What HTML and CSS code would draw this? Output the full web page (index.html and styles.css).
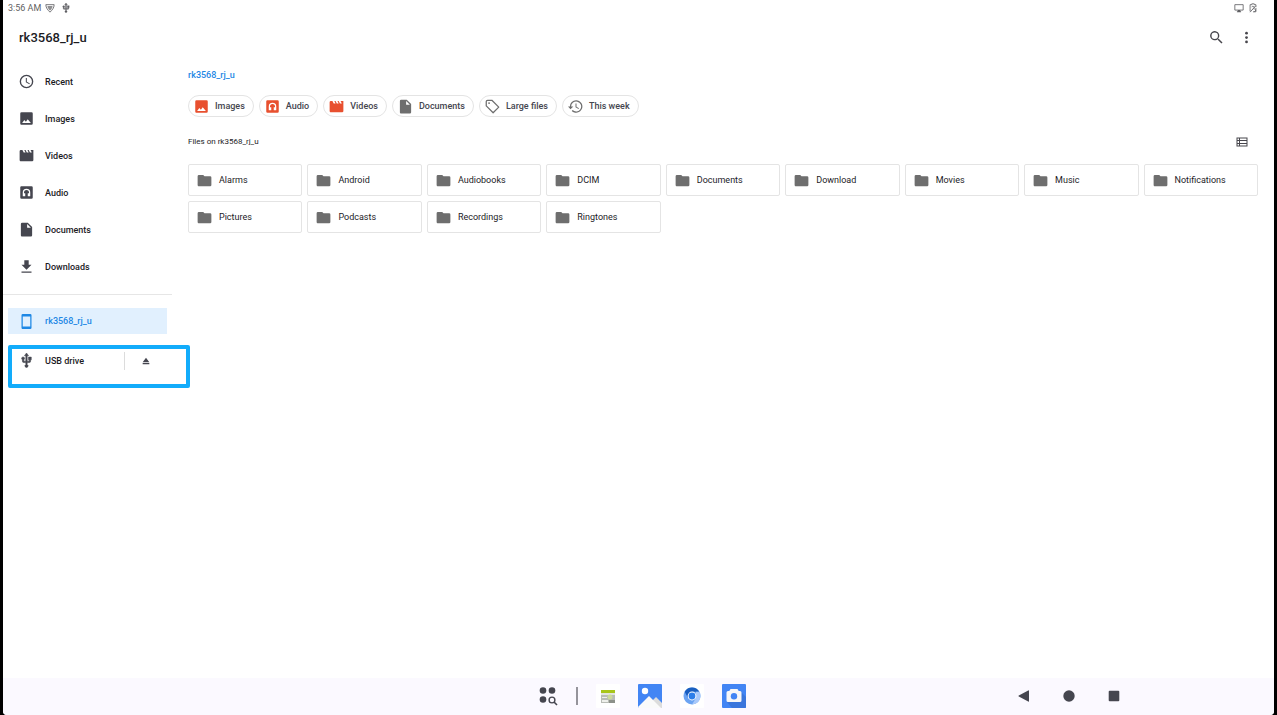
FILE: index.html
```html
<!DOCTYPE html>
<html lang="en">
<head>
  <meta charset="UTF-8">
  <meta name="viewport" content="width=device-width, initial-scale=1.0">
  <title>Files</title>
  <link rel="stylesheet" href="styles.css">
</head>
<body>
  <svg class="sprite" aria-hidden="true">
    <symbol id="i-clock" viewBox="1 1 22 22"><path d="M12 2a10 10 0 1 0 0 20 10 10 0 0 0 0-20zm0 18a8 8 0 1 1 0-16 8 8 0 0 1 0 16zm.5-13H11v6l5.2 3.2.8-1.3-4.5-2.7z"/></symbol>
    <symbol id="i-image" viewBox="0 0 24 24"><path d="M22 20V4a2 2 0 0 0-2-2H4a2 2 0 0 0-2 2v16c0 1.100.9 2 2 2h16a2 2 0 0 0 2-2zM5 19l3.500-4.500 2.500 2.500 3-4 5 6z" fill-rule="evenodd"/></symbol>
    <symbol id="i-video" viewBox="0 0 24 24"><path d="M18.500 3l2 4h-3l-2-4h-2l2 4h-3l-2-4h-2l2 4h-3l-2-4H3a2 2 0 0 0-2 2v14c0 1.100.9 2 2 2h18a2 2 0 0 0 2-2V3z"/></symbol>
    <symbol id="i-audio" viewBox="0 0 24 24"><path fill-rule="evenodd" d="M4 2h16a2 2 0 0 1 2 2v16a2 2 0 0 1-2 2H4a2 2 0 0 1-2-2V4c0-1.100.9-2 2-2zm2 10v6h4v-5H8v-1a4 4 0 0 1 8 0v1h-2v5h4v-6a6 6 0 0 0-12 0z"/></symbol>
    <symbol id="i-doc" viewBox="0 0 24 24"><path d="M5 1a2 2 0 0 0-2 2v18c0 1.100.9 2 2 2h14a2 2 0 0 0 2-2V8l-7-7zm8 8V3l6 6z"/></symbol>
    <symbol id="i-download" viewBox="0 0 24 24"><path d="M20 9h-4.500V2h-7v7H4l8 8zM4 20v2h16v-2z"/></symbol>
    <symbol id="i-phone" viewBox="0 0 24 24"><path fill-rule="evenodd" d="M18 0H6a2 2 0 0 0-2 2v20c0 1.100.9 2 2 2h12a2 2 0 0 0 2-2V2a2 2 0 0 0-2-2zm0 20H6V4h12z"/></symbol>
    <symbol id="i-usb" viewBox="1 1 22 22"><path stroke="currentColor" stroke-width=".8" d="M15 7v4h1v2h-3V5h2l-3-4-3 4h2v8H8v-2.070c.7-.37 1.200-1.080 1.200-1.930a2.200 2.200 0 1 0-4.400 0c0 .85.500 1.560 1.200 1.930V13a2 2 0 0 0 2 2h3v3.050a2.200 2.200 0 1 0 2 0V15h3a2 2 0 0 0 2-2v-2h1V7z"/></symbol>
    <symbol id="i-eject" viewBox="0 0 24 24"><path d="M4 17h16v3H4zM12 4L4 15h16z"/></symbol>
    <symbol id="i-tag" viewBox="0 0 24 24"><path fill="none" stroke="currentColor" stroke-width="2" stroke-linejoin="round" d="M2 4v7l11 11 9-9L11 2H4a2 2 0 0 0-2 2z"/><circle cx="6.500" cy="6.500" r="1.500"/></symbol>
    <symbol id="i-history" viewBox="0 0 24 24"><path d="M13 2a10 10 0 0 0-10 10H0l4 4.500L8.500 12H5a8 8 0 1 1 2.400 5.700L6 19.100A10 10 0 1 0 13 2zm-1 5v6l4.800 2.900.8-1.300-4-2.400V7z"/></symbol>
    <symbol id="i-folder" viewBox="0 0 24 24"><path d="M10 3H3a2 2 0 0 0-2 2v14c0 1.100.9 2 2 2h18a2 2 0 0 0 2-2V7a2 2 0 0 0-2-2h-9z"/></symbol>
    <symbol id="i-search" viewBox="0 0 24 24"><path d="M15.500 14h-.8l-.3-.3a6.500 6.500 0 1 0-.7.7l.3.3v.8l5 5 1.500-1.500zm-6 0a4.500 4.500 0 1 1 0-9 4.500 4.500 0 0 1 0 9z"/></symbol>
    <symbol id="i-more" viewBox="0 0 24 24"><circle cx="12" cy="5" r="2.200"/><circle cx="12" cy="12" r="2.200"/><circle cx="12" cy="19" r="2.200"/></symbol>
    <symbol id="i-list" viewBox="0 0 24 24"><path fill-rule="evenodd" d="M1 3h22v18H1zm2 2v3h3V5zm5 0v3h13V5zm-5 5v4h3v-4zm5 0v4h13v-4zm-5 6v3h3v-3zm5 0v3h13v-3z"/></symbol>
    <symbol id="i-shield" viewBox="0 0 24 24"><path fill="none" stroke="currentColor" stroke-width="2" d="M2 4h20c0 8-5 13-10 18C7 17 2 12 2 4z"/><path d="M6 7h12c0 5-3 8-6 11-3-3-6-6-6-11z" opacity=".7"/></symbol>
    <symbol id="i-screen" viewBox="0 0 24 24"><path fill="none" stroke="currentColor" stroke-width="2" d="M2 4h20v13H2z"/><path d="M9 17h6v3h2v2H7v-2h2z"/></symbol>
    <symbol id="i-battery" viewBox="0 0 24 24"><path fill="none" stroke="currentColor" stroke-width="2" d="M5 20V4h4V2h6v2h4v6M5 22L18 7M9 10a3 3 0 1 1 5 3l-3 3M19 12v9h-7M15 14l4 3-4 5"/></symbol>
  </svg>

  <div class="screen">
    <div class="statusbar">
      <span>3:56 AM</span>
      <svg class="icon-xs"><use href="#i-shield"/></svg>
      <svg class="icon-xs status-usb"><use href="#i-usb"/></svg>
      <svg class="icon-xs push"><use href="#i-screen"/></svg>
      <svg class="icon-xs"><use href="#i-battery"/></svg>
    </div>

    <header class="toolbar">
      <h1>rk3568_rj_u</h1>
      <button class="icon-btn" aria-label="Search"><svg class="icon-lg"><use href="#i-search"/></svg></button>
      <button class="icon-btn" aria-label="More options"><svg class="icon"><use href="#i-more"/></svg></button>
    </header>

    <div class="content">
      <nav class="sidebar">
        <a class="root" href="#"><svg class="icon"><use href="#i-clock"/></svg>Recent</a>
        <a class="root" href="#"><svg class="icon"><use href="#i-image"/></svg>Images</a>
        <a class="root" href="#"><svg class="icon"><use href="#i-video"/></svg>Videos</a>
        <a class="root" href="#"><svg class="icon"><use href="#i-audio"/></svg>Audio</a>
        <a class="root" href="#"><svg class="icon"><use href="#i-doc"/></svg>Documents</a>
        <a class="root" href="#"><svg class="icon"><use href="#i-download"/></svg>Downloads</a>
        <hr>
        <a class="root selected" href="#"><svg class="icon"><use href="#i-phone"/></svg>rk3568_rj_u</a>
        <div class="usb">
          <a class="root" href="#"><svg class="icon"><use href="#i-usb"/></svg>USB drive</a>
          <button class="eject" aria-label="Eject"><svg class="icon-xs"><use href="#i-eject"/></svg></button>
          <div class="highlight"></div>
        </div>
      </nav>

      <main class="files">
        <a class="crumb" href="#">rk3568_rj_u</a>
        <div class="chips">
          <button class="chip red"><svg class="icon"><use href="#i-image"/></svg>Images</button>
          <button class="chip red"><svg class="icon"><use href="#i-audio"/></svg>Audio</button>
          <button class="chip red"><svg class="icon"><use href="#i-video"/></svg>Videos</button>
          <button class="chip"><svg class="icon"><use href="#i-doc"/></svg>Documents</button>
          <button class="chip"><svg class="icon"><use href="#i-tag"/></svg>Large files</button>
          <button class="chip"><svg class="icon"><use href="#i-history"/></svg>This week</button>
        </div>
        <div class="list-head">
          <h2>Files on rk3568_rj_u</h2>
          <button class="icon-btn" aria-label="List view"><svg class="icon-sm"><use href="#i-list"/></svg></button>
        </div>
        <div class="grid">
          <a class="folder" href="#"><svg class="icon"><use href="#i-folder"/></svg>Alarms</a>
          <a class="folder" href="#"><svg class="icon"><use href="#i-folder"/></svg>Android</a>
          <a class="folder" href="#"><svg class="icon"><use href="#i-folder"/></svg>Audiobooks</a>
          <a class="folder" href="#"><svg class="icon"><use href="#i-folder"/></svg>DCIM</a>
          <a class="folder" href="#"><svg class="icon"><use href="#i-folder"/></svg>Documents</a>
          <a class="folder" href="#"><svg class="icon"><use href="#i-folder"/></svg>Download</a>
          <a class="folder" href="#"><svg class="icon"><use href="#i-folder"/></svg>Movies</a>
          <a class="folder" href="#"><svg class="icon"><use href="#i-folder"/></svg>Music</a>
          <a class="folder" href="#"><svg class="icon"><use href="#i-folder"/></svg>Notifications</a>
          <a class="folder" href="#"><svg class="icon"><use href="#i-folder"/></svg>Pictures</a>
          <a class="folder" href="#"><svg class="icon"><use href="#i-folder"/></svg>Podcasts</a>
          <a class="folder" href="#"><svg class="icon"><use href="#i-folder"/></svg>Recordings</a>
          <a class="folder" href="#"><svg class="icon"><use href="#i-folder"/></svg>Ringtones</a>
        </div>
      </main>
    </div>

    <footer class="taskbar">
      <div class="apps">
        <button class="all-apps" aria-label="All apps">
          <svg viewBox="0 0 20 20"><circle cx="5" cy="4.500" r="3.300"/><circle cx="14" cy="4.500" r="3.300"/><circle cx="5" cy="13.500" r="3.300"/><circle cx="14" cy="14" r="2.900" fill="none" stroke="currentColor" stroke-width="1.400"/><path d="M16 16l3 3" stroke="currentColor" stroke-width="1.600"/></svg>
        </button>
        <span class="sep"></span>
        <button class="app" aria-label="Explorer">
          <svg viewBox="0 0 24 24"><rect width="24" height="24" rx="1" fill="#fff"/><path fill="#b9bdb6" d="M5 6h14v13H5z"/><path fill="#a8c61a" d="M5 6h14v3H5z"/><path fill="#e3e5df" d="M5 9h14v2H5z"/><path fill="#eef0eb" d="M6 13h5v1H6zM6 16h6v2H6z"/><circle cx="14" cy="13" r="2.500" fill="#cddb9a"/><path fill="#8d928a" d="M13 16h6v3h-6z"/></svg>
        </button>
        <button class="app" aria-label="Gallery">
          <svg viewBox="0 0 24 24"><rect width="24" height="24" rx="1" fill="#4285f4"/><circle cx="7" cy="7" r="3.200" fill="#fff"/><path fill="#dcdcdc" d="M13 18l5-5 6 6v5H13z"/><path fill="#fafafa" d="M0 23l11-11 12 12H1a1 1 0 0 1-1-1z"/></svg>
        </button>
        <button class="app" aria-label="Browser">
          <svg viewBox="0 0 24 24"><rect width="24" height="24" rx="1" fill="#fff"/><circle cx="12" cy="12" r="8.500" fill="#6ba4f2"/><path fill="#1a5fc0" d="M4.600 7.800A8.500 8.500 0 0 1 19.400 7.800H12l-4 6z"/><path fill="#a9c9fa" d="M19.400 7.800A8.500 8.500 0 0 1 12 20.500l4-6.500V7.800z"/><circle cx="12" cy="12" r="4.400" fill="#fff"/><circle cx="12" cy="12" r="3.400" fill="#2b7de9"/></svg>
        </button>
        <button class="app" aria-label="Camera">
          <svg viewBox="0 0 24 24"><rect width="24" height="24" rx="1" fill="#4285f4"/><path fill="#3a76dc" d="M19 8l5 5v10a1 1 0 0 1-1 1H10l-5-6z"/><path fill="#f7f7f7" d="M8.500 5h7l1.200 2H18a1.500 1.500 0 0 1 1.500 1.500v8A1.500 1.500 0 0 1 18 18H6a1.500 1.500 0 0 1-1.500-1.500v-8A1.500 1.500 0 0 1 6 7h1.300z"/><circle cx="12" cy="12.300" r="3.200" fill="#4285f4"/></svg>
        </button>
      </div>
      <div class="nav-keys">
        <button aria-label="Back"><svg viewBox="0 0 12 12"><path d="M11 .8v10.400a.5.500 0 0 1-.8.300L.8 6.500a.6.600 0 0 1 0-1L10.200.5a.5.500 0 0 1 .8.300z"/></svg></button>
        <button aria-label="Home"><svg viewBox="0 0 12 12"><circle cx="6" cy="6" r="5.700"/></svg></button>
        <button aria-label="Overview"><svg viewBox="0 0 12 12"><rect x=".7" y=".7" width="10.600" height="10.600" rx="1"/></svg></button>
      </div>
    </footer>
  </div>
</body>
</html>
```

FILE: styles.css
```css
* {
  box-sizing: border-box;
}

body {
  margin: 0;
  padding: 0 3px;
  background-color: #000;
  color: #1c1b1f;
  font-family: Roboto, sans-serif;
  font-size: 9px;
  line-height: 12px;
}

svg {
  display: block;
  flex: none;
  fill: currentColor;
}

a {
  color: inherit;
  text-decoration: none;
}

button {
  padding: 0;
  border: none;
  background: none;
  color: inherit;
  font: inherit;
  cursor: pointer;
}

.sprite {
  display: none;
}

.icon-xs {
  width: 10px;
  height: 10px;
}

.icon-sm {
  width: 12px;
  height: 12px;
}

.icon {
  width: 15px;
  height: 15px;
}

.icon-lg {
  width: 17px;
  height: 17px;
}

.screen {
  display: flex;
  flex-direction: column;
  min-height: 100vh;
  background-color: #fff;
  border-radius: 0 0 4px 4px;
}

.statusbar {
  display: flex;
  align-items: center;
  gap: 4px;
  height: 16px;
  padding: 0 16px 0 5px;
  color: #5f5f63;
}

.status-usb {
  margin-left: 2px;
}

.push {
  margin-left: auto;
}

.toolbar {
  display: flex;
  align-items: center;
  gap: 14px;
  height: 43px;
  padding: 0 20px 0 16px;
}

.toolbar h1 {
  flex: 1;
  margin: 0;
  font-size: 13px;
  font-weight: 500;
  line-height: 16px;
}

.icon-btn {
  color: #47464c;
}

.content {
  display: flex;
  flex: 1;
}

.sidebar {
  width: 169px;
  padding-top: 4px;
  font-weight: 500;
}

.root {
  display: flex;
  align-items: center;
  gap: 11px;
  height: 37px;
  padding-left: 16px;
}

.root svg {
  color: #45464f;
}

.sidebar hr {
  margin: 9px 0 13px;
  border: none;
  border-top: 1px solid #e6e6e6;
}

.root.selected {
  height: 26px;
  margin: 0 5px;
  padding-left: 11px;
  background-color: #e1f0fe;
  color: #1e88e5;
}

.selected svg {
  color: inherit;
}

.usb {
  display: flex;
  align-items: center;
  position: relative;
  margin-top: 8px;
}

.usb .root {
  flex: 1;
}

.eject {
  display: flex;
  align-items: center;
  width: 48px;
  height: 18px;
  padding-left: 16px;
  border-left: 1px solid #dcdcdc;
  color: #45464f;
}

/* frame drawn over the drive row, a bit wider than the sidebar */
.highlight {
  position: absolute;
  top: 3px;
  left: 5px;
  right: -18px;
  height: 43px;
  border: 4px solid #12acfb;
  border-radius: 2px;
  pointer-events: none;
}

.files {
  flex: 1;
  padding: 10px 16px 0;
}

.crumb {
  display: block;
  color: #1e88e5;
  font-weight: 500;
}

.chips {
  display: flex;
  flex-wrap: wrap;
  gap: 5px;
  margin-top: 14px;
}

.chip {
  display: flex;
  align-items: center;
  gap: 6px;
  height: 22px;
  padding: 0 8px 0 5px;
  border: 1px solid #e4e4e4;
  border-radius: 11px;
  color: #45464f;
  font-weight: 500;
}

.chip svg {
  color: #6e6e6e;
}

.red svg {
  color: #e8502f;
}

.list-head {
  display: flex;
  align-items: center;
  justify-content: space-between;
  height: 22px;
  margin: 14px 0 11px;
  padding-right: 10px;
}

.list-head h2 {
  margin: 0;
  font-size: 8px;
  font-weight: 400;
}

.grid {
  display: grid;
  grid-template-columns: repeat(auto-fill, minmax(110px, 1fr));
  gap: 5px;
}

.folder {
  display: flex;
  align-items: center;
  gap: 7px;
  height: 32px;
  padding-left: 8px;
  border: 1px solid #e4e4e4;
  border-radius: 2px;
}

.folder svg {
  color: #6e6e6e;
}

.taskbar {
  display: grid;
  grid-template-columns: 1fr auto 1fr;
  align-items: center;
  height: 37px;
  padding: 0 0 1px 6px;
  background-color: #fbf9ff;
  border-radius: 0 0 4px 4px;
  color: #45464f;
}

.apps {
  display: flex;
  grid-column: 2;
  align-items: center;
  gap: 18px;
}

.all-apps svg {
  width: 20px;
  height: 20px;
}

.sep {
  width: 2px;
  height: 18px;
  background-color: #95949b;
}

.app svg {
  width: 24px;
  height: 24px;
}

.nav-keys {
  display: flex;
  justify-content: flex-end;
  gap: 33px;
  padding-right: 154px;
}

.nav-keys svg {
  width: 12px;
  height: 12px;
}
```
